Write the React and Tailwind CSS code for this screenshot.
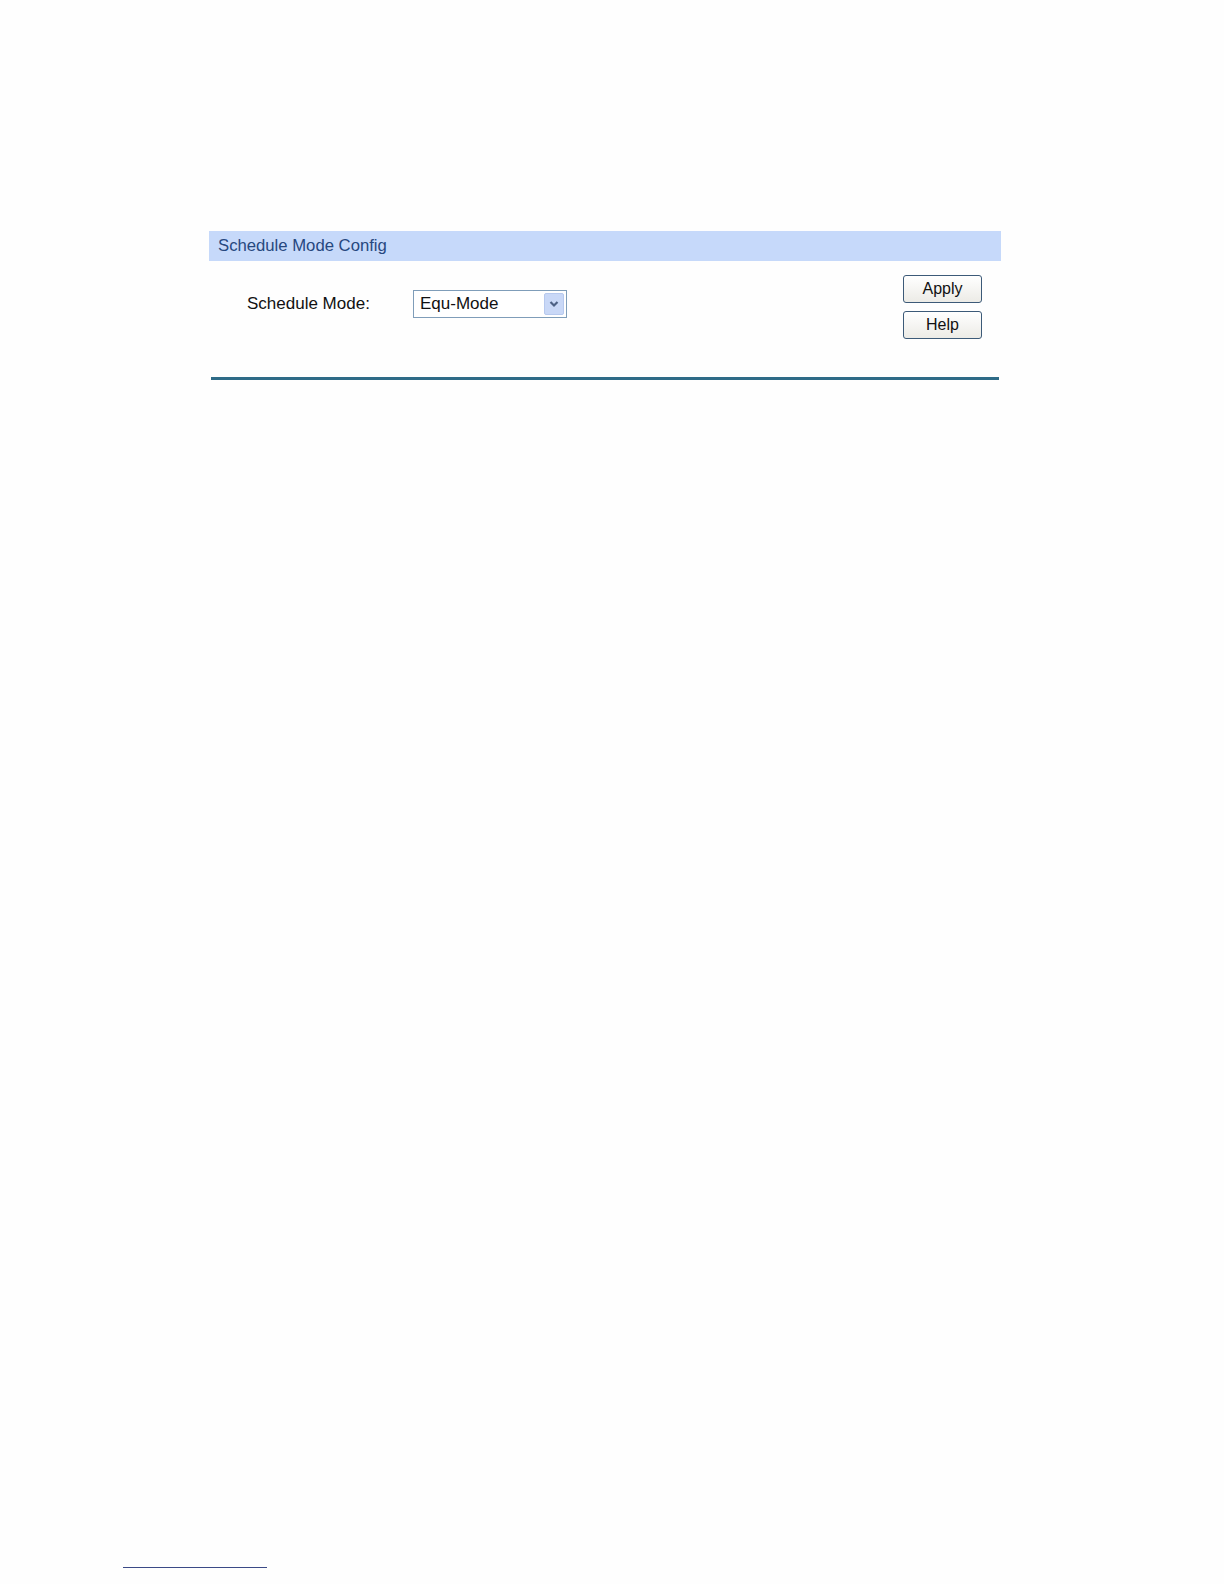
import React from "react";

function Chevron() {
  return (
    <svg width="10" height="8" viewBox="0 0 10 8">
      <path d="M1.5 2 L5 5.5 L8.5 2" fill="none" stroke="#4d6185" strokeWidth="2.2" />
    </svg>
  );
}

function XpButton({ label }) {
  return (
    <button className="w-[79px] h-[28px] rounded-[3px] border border-[#3c5a78] bg-gradient-to-b from-white to-[#ecebe6] text-[16px] text-[#111] leading-none">
      {label}
    </button>
  );
}

export default function App() {
  return (
    <div
      className="w-[1224px] h-[1584px] bg-[#fefefe] flex flex-col"
      style={{ fontFamily: '"Liberation Sans", Arial, sans-serif' }}
    >
      <div className="ml-[209px] mt-[231px] w-[792px] flex flex-col">
        {/* HEADER */}
        <div className="h-[30px] bg-[#c6d9fa] flex items-center pl-[9px] text-[16.7px] text-[#27487f]">
          Schedule Mode Config
        </div>

        {/* BODY */}
        <div className="flex justify-between pt-[14px] pr-[19px] h-[116px]">
          <div className="flex items-center h-[28px] mt-[15px]">
            <span className="w-[204px] pl-[38px] text-[17px] text-[#111]">Schedule Mode:</span>
            <div className="w-[154px] h-[28px] border border-[#7f9db9] bg-white flex items-center justify-between pl-[6px] pr-[2px]">
              <span className="text-[17px] text-[#111]">Equ-Mode</span>
              <div className="w-[20px] h-[22px] bg-[#c9d8f7] border border-[#b7c9ee] rounded-[2px] flex items-center justify-center">
                <Chevron />
              </div>
            </div>
          </div>
          <div className="flex flex-col gap-[8px]">
            <XpButton label="Apply" />
            <XpButton label="Help" />
          </div>
        </div>

        {/* BOTTOM RULE */}
        <div className="mx-[2px] h-[3px] bg-[#2e6b87]" />
      </div>

      <div className="mt-auto mb-[16px] ml-[123px] w-[144px] h-[1px] bg-[#3b4a86]" />
    </div>
  );
}
